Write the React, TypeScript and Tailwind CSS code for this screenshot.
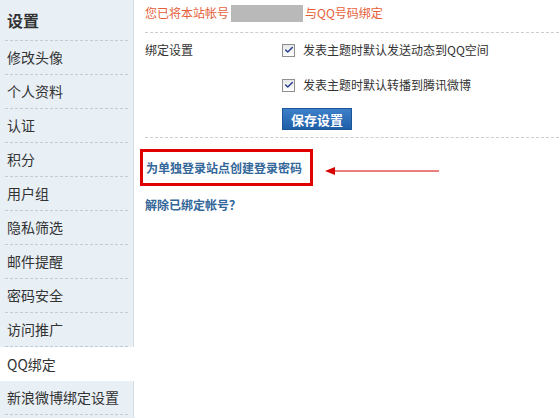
import { Check } from 'lucide-react';

const menu = ['修改头像', '个人资料', '认证', '积分', '用户组', '隐私筛选', '邮件提醒', '密码安全', '访问推广', 'QQ绑定', '新浪微博绑定设置'];

function Box({ label }: { label: string }) {
  return (
    <label className="flex items-center gap-[8px] h-[20px]">
      <span className="w-[13px] h-[13px] border border-[#8e8f8f] bg-gradient-to-b from-[#e6e6e6] to-white flex items-center justify-center">
        <Check className="w-[10px] h-[10px] text-[#2a3f8f]" strokeWidth={3.5} />
      </span>
      <span>{label}</span>
    </label>
  );
}

export default function App() {
  return (
    <div
      className="w-[559px] h-[418px] bg-white flex overflow-hidden text-[12px] text-[#333]"
      style={{ fontFamily: '"Noto Sans CJK SC", "Microsoft YaHei", sans-serif' }}
    >
      {/* Sidebar */}
      <div className="w-[134px] shrink-0 bg-[#e8eff5] border-r border-[#d3dde6] flex flex-col">
        <div className="h-[41px] mx-[5px] flex items-center px-[2px] border-b border-dashed border-[#c4ccd3] text-[16px] font-bold text-[#333]">
          设置
        </div>
        {menu.map((m) =>
          m === 'QQ绑定' ? (
            <div key={m} className="h-[34px] -mr-[1px] bg-white flex items-center pl-[7px] text-[14px] text-[#333]">
              {m}
            </div>
          ) : (
            <div key={m} className="h-[34px] mx-[5px] flex items-center px-[2px] border-b border-dashed border-[#c4ccd3] text-[14px] text-[#333]">
              {m}
            </div>
          )
        )}
      </div>

      {/* Main */}
      <div className="flex-1 pl-[11px] flex flex-col">
        <div className="h-[33px] flex items-center border-b border-dashed border-[#ccc] text-[#e5603a] pb-[6px]">
          您已将本站帐号
          <span className="inline-block w-[72px] h-[17px] bg-[#b9b9b9] mx-[2px]" />
          与QQ号码绑定
        </div>

        <div className="flex pt-[7px] pb-[7px] border-b border-dashed border-[#ccc]">
          <div className="w-[137px] pt-[1px]">绑定设置</div>
          <div className="flex flex-col">
            <Box label="发表主题时默认发送动态到QQ空间" />
            <div className="h-[15px]" />
            <Box label="发表主题时默认转播到腾讯微博" />
            <button className="mt-[13px] w-[70px] h-[22px] bg-gradient-to-b from-[#3d7fc9] to-[#1f5fa8] border border-[#1c5598] text-white text-[13px] font-bold leading-none">
              保存设置
            </button>
          </div>
        </div>

        <div className="flex items-center mt-[11px] -ml-[5px]">
          <div className="border-[3px] border-[#e00000] h-[37px] w-[173px] flex items-center pl-[3px] font-bold text-[#336699]">
            为单独登录站点创建登录密码
          </div>
          <svg width="114" height="10" viewBox="0 0 114 10" className="ml-[12px] mt-[7px]">
            <polygon points="0,5 10,1 10,9" fill="#d80000" />
            <line x1="9" y1="5" x2="114" y2="5" stroke="#d80000" strokeWidth="1.2" />
          </svg>
        </div>

        <div className="mt-[10px] font-bold text-[#336699]">解除已绑定帐号？</div>
      </div>
    </div>
  );
}
